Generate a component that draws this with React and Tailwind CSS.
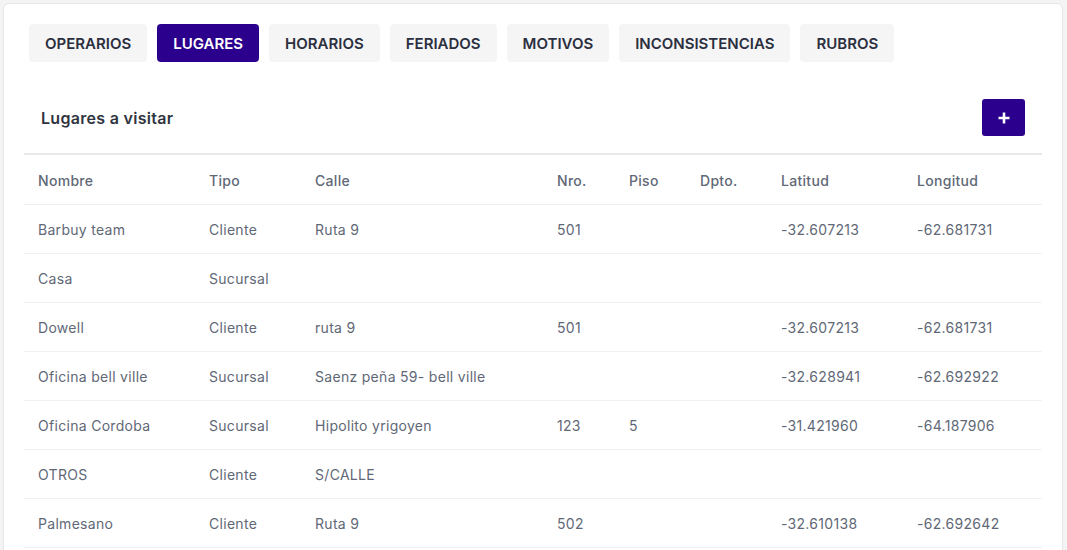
import React from "react";

const tabs = ["OPERARIOS", "LUGARES", "HORARIOS", "FERIADOS", "MOTIVOS", "INCONSISTENCIAS", "RUBROS"];

const cols = [
  { label: "Nombre", w: "w-[171px]" },
  { label: "Tipo", w: "w-[106px]" },
  { label: "Calle", w: "w-[242px]" },
  { label: "Nro.", w: "w-[72px]" },
  { label: "Piso", w: "w-[71px]" },
  { label: "Dpto.", w: "w-[81px]" },
  { label: "Latitud", w: "w-[136px]" },
  { label: "Longitud", w: "" },
];

const rows = [
  ["Barbuy team", "Cliente", "Ruta 9", "501", "", "", "-32.607213", "-62.681731"],
  ["Casa", "Sucursal", "", "", "", "", "", ""],
  ["Dowell", "Cliente", "ruta 9", "501", "", "", "-32.607213", "-62.681731"],
  ["Oficina bell ville", "Sucursal", "Saenz peña 59- bell ville", "", "", "", "-32.628941", "-62.692922"],
  ["Oficina Cordoba", "Sucursal", "Hipolito yrigoyen", "123", "5", "", "-31.421960", "-64.187906"],
  ["OTROS", "Cliente", "S/CALLE", "", "", "", "", ""],
  ["Palmesano", "Cliente", "Ruta 9", "502", "", "", "-32.610138", "-62.692642"],
];

export default function App() {
  return (
    <div
      className="min-h-[550px] bg-[#f4f4f5] pt-[3px] pl-[3px] pr-[4px] overflow-hidden"
      style={{ fontFamily: "Inter, 'Noto Sans', sans-serif" }}
    >
      <div className="bg-white border border-[#e6e6e6] rounded-[6px] pt-5 px-5 h-[560px]">
        <div className="flex gap-[10px] ml-[5px]">
          {tabs.map((t) => (
            <div
              key={t}
              className={
                "h-[38px] pt-[2px] px-4 flex items-center rounded-[4px] text-[15px] font-semibold " +
                (t === "LUGARES" ? "bg-[#2a008c] text-white" : "bg-[#f5f5f5] text-[#2b2f3f]")
              }
            >
              {t}
            </div>
          ))}
        </div>
        <div className="mt-5 px-[17px] py-[17px] flex items-center justify-between">
          <div className="text-[16px] font-semibold text-[#2f3440] tracking-[0.3px]">Lugares a visitar</div>
          <div className="w-[43px] h-[37px] bg-[#2a008c] rounded-[3px] flex items-center justify-center">
            <svg width="14" height="14" viewBox="0 0 14 14">
              <path d="M7 1.5v11M1.5 7h11" stroke="white" strokeWidth="2.6" strokeLinecap="butt" />
            </svg>
          </div>
        </div>
        <table className="w-full table-fixed border-t-2 border-[#e8e8e8] text-[14px] tracking-[0.3px] text-[#5f6876]">
          <thead>
            <tr className="h-[50px] border-b border-[#eeeeee]">
              {cols.map((c) => (
                <th key={c.label} className={"text-left font-medium px-[14px] pt-[2px] " + c.w}>
                  {c.label}
                </th>
              ))}
            </tr>
          </thead>
          <tbody>
            {rows.map((r, i) => (
              <tr key={i} className="h-[49px] border-b border-[#f0f0f0]">
                {r.map((v, j) => (
                  <td key={j} className="px-[14px] pt-[2px] whitespace-nowrap">
                    {v}
                  </td>
                ))}
              </tr>
            ))}
          </tbody>
        </table>
      </div>
    </div>
  );
}
